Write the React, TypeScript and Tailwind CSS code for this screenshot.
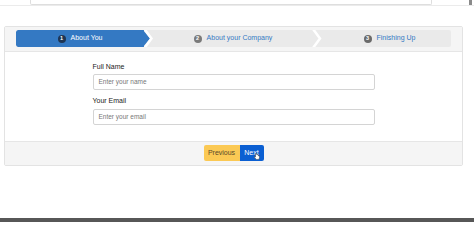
import React from "react";

function Chevron({ first }: { first?: boolean }) {
  return (
    <svg width="12" height="17" viewBox="0 0 12 17" className="shrink-0 -mx-[1px]">
      {first && <polygon points="0,0 7,8.5 0,17" fill="#3479c3" />}
      <polyline points={first ? "1.5,-1 8.5,8.5 1.5,18" : "2,-1 9,8.5 2,18"} fill="none" stroke="#ffffff" strokeWidth="2.5" />
    </svg>
  );
}

export default function App() {
  return (
    <div className="relative w-[474px] h-[222px] bg-white overflow-hidden" style={{ fontFamily: '"Liberation Sans", Arial, sans-serif' }}>
      {/* browser strip on top */}
      <div className="relative h-[6px] border-b border-[#ebebeb]">
        <div className="ml-[30px] w-[402px] h-[5px] border-x border-b border-[#dedede] rounded-b-[2px] bg-white" />
        <div className="absolute left-[469px] top-0 w-[3px] h-[5px] bg-[#8a8a8a]" />
      </div>

      {/* wizard card */}
      <div className="ml-[4px] mt-[20px] w-[459px] border border-[#e3e3e3] rounded-[2px] bg-white">
        <div className="bg-[#f5f5f5] border-b border-[#e6e6e6] px-[11px] pt-[3px] pb-[4px]">
          <div className="flex h-[17px] bg-[#eaeaea] rounded-[2px] overflow-hidden">
            <div className="w-[128px] shrink-0 flex items-center justify-center gap-[5px] bg-[#3479c3] rounded-l-[2px] text-white text-[7px]">
              <span className="w-[8px] h-[8px] rounded-full bg-[#1e3553] flex items-center justify-center text-[5.5px] font-bold leading-none">1</span>
              <span>About You</span>
            </div>
            <Chevron first />
            <div className="w-[158px] shrink-0 flex items-center justify-center gap-[5px] text-[#3479c3] text-[7px]">
              <span className="w-[8px] h-[8px] rounded-full bg-[#7a7a7a] flex items-center justify-center text-white text-[5.5px] font-bold leading-none">2</span>
              <span>About your Company</span>
            </div>
            <Chevron />
            <div className="flex-1 flex items-center justify-center gap-[5px] text-[#3479c3] text-[7px] pl-[6px]">
              <span className="w-[8px] h-[8px] rounded-full bg-[#6a6a6a] flex items-center justify-center text-white text-[5.5px] font-bold leading-none">3</span>
              <span>Finishing Up</span>
            </div>
          </div>
        </div>

        <div className="pt-[9px] pb-[16px]">
          <div className="mx-auto w-[282px]">
            <div className="text-[7px] leading-[12px] text-[#222] font-medium mb-[1px]">Full Name</div>
            <div className="h-[16px] border border-[#d4d4d4] rounded-[2px] px-[5px] flex items-center text-[6.5px] text-[#777]">Enter your name</div>
            <div className="text-[7px] leading-[12px] text-[#222] font-medium mt-[5px] mb-[2px]">Your Email</div>
            <div className="h-[16px] border border-[#d4d4d4] rounded-[2px] px-[5px] flex items-center text-[6.5px] text-[#777]">Enter your email</div>
          </div>
        </div>

        <div className="bg-[#f5f5f5] border-t border-[#e6e6e6] pt-[3px] pb-[4px] flex justify-center">
          <div className="flex h-[16px] text-[7px]">
            <button className="w-[36px] bg-[#fbc954] text-[#5a4a2a] rounded-l-[2px]">Previous</button>
            <button className="relative w-[24px] bg-[#0b5fd2] text-white rounded-r-[2px]">
              Next
              <svg width="6" height="7" viewBox="0 0 6 7" className="absolute left-[14px] top-[8px]">
                <path d="M1.5 0.5 v3.5 l-1-0.8 v1.2 l1.8 2 h2.5 l0.7-1.5 v-2 h-1 v-1 h-1 v-0.5 h-1 v-1z" fill="#ffffff" stroke="#333" strokeWidth="0.5" />
              </svg>
            </button>
          </div>
        </div>
      </div>

      <div className="absolute left-0 bottom-0 w-full h-[4px] bg-[#575757]" />
    </div>
  );
}
